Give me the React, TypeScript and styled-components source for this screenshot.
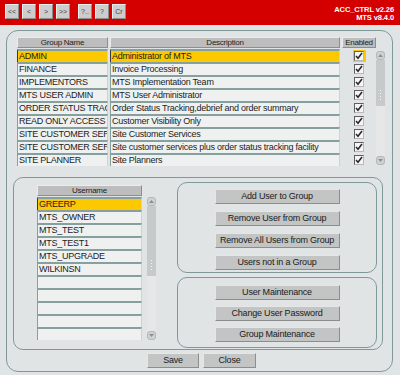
import React from "react";
import styled, { createGlobalStyle } from "styled-components";

const GlobalStyle = createGlobalStyle`
  html, body { margin: 0; padding: 0; background: #e1e4e4; }
  body { font-family: "Liberation Sans", Arial, sans-serif; color: #1c1c1c; }
  * { box-sizing: border-box; }
`;

const Screen = styled.div`
  width: 400px;
  height: 375px;
  overflow: hidden;
  background: #e1e4e4;
  display: flex;
  flex-direction: column;
`;

const TopBar = styled.header`
  height: 25px;
  flex: none;
  background: #d40000;
  display: flex;
  align-items: flex-start;
  justify-content: space-between;
  padding: 4px 6px 0 5px;
`;

const Tools = styled.div`
  display: flex;
  gap: 8px;
`;

const ToolGroup = styled.div`
  display: flex;
  gap: 3px;
`;

const ToolButton = styled.button`
  width: 14px;
  height: 15px;
  padding: 0;
  margin: 0;
  background: #cdcdcd;
  border: 1px solid;
  border-color: #efefef #8c8c8c #8c8c8c #efefef;
  font-family: "Liberation Sans", Arial, sans-serif;
  font-size: 7px;
  color: #444;
  display: flex;
  align-items: center;
  justify-content: center;
`;

const Version = styled.div`
  color: #fff;
  font-weight: bold;
  font-size: 7.5px;
  line-height: 7.5px;
  text-align: right;
  padding-top: 2px;
  letter-spacing: -0.1px;
`;

const OuterPanel = styled.section`
  margin: 5px 0 0 6px;
  width: 387px;
  height: 342px;
  border: 1px solid #7f9999;
  border-radius: 12px;
  padding: 6px 0 0 6px;
  display: flex;
  flex-direction: column;
`;

const TableArea = styled.div`
  display: flex;
  margin-left: 4px;
`;

const GroupGrid = styled.div`
  display: grid;
  grid-template-columns: 91px 230px 34px;
  grid-template-rows: 12px repeat(9, 13px);
  column-gap: 2px;
`;

const HeadCell = styled.div`
  height: 11px;
  background: #bdbdbd;
  border: 1px solid;
  border-color: #ececec #8e8e8e #8e8e8e #ececec;
  font-size: 8px;
  line-height: 9px;
  letter-spacing: -0.25px;
  text-align: center;
  color: #222;
  white-space: nowrap;
  overflow: hidden;
`;

const Cell = styled.div<{ $selected?: boolean }>`
  height: 13px;
  background: ${(p) => (p.$selected ? "#fcc800" : "#eff1f1")};
  border-top: 2px solid #86a0a0;
  border-left: 1px solid ${(p) => (p.$selected ? "#3a3a3a" : "#86a0a0")};
  border-right: 1px solid #c9d4d4;
  padding-left: 1px;
  font-size: 9px;
  line-height: 11px;
  letter-spacing: -0.25px;
  white-space: nowrap;
  overflow: hidden;
  color: #1c1c1c;
`;

const CheckCell = styled.div`
  height: 13px;
  display: flex;
  align-items: center;
  justify-content: center;
`;

const CheckHolder = styled.div<{ $selected?: boolean }>`
  width: 13px;
  height: 12px;
  margin-top: 1px;
  display: flex;
  align-items: center;
  justify-content: center;
  background: ${(p) => (p.$selected ? "#fcc800" : "transparent")};
`;

const CheckBox = styled.div`
  width: 10px;
  height: 10px;
  background: #f5f5f5;
  border: 1px solid;
  border-color: #5e5e5e #b8b8b8 #b8b8b8 #5e5e5e;
  display: flex;
  align-items: center;
  justify-content: center;
`;

const ScrollBar = styled.div<{ $top: number; $height: number }>`
  width: 9px;
  height: ${(p) => p.$height}px;
  margin-top: ${(p) => p.$top}px;
  display: flex;
  flex-direction: column;
`;

const ScrollArrow = styled.div`
  width: 9px;
  height: 9px;
  flex: none;
  border-radius: 3px;
  background: #cfd2d2;
  border: 1px solid #b3b8b8;
  display: flex;
  align-items: center;
  justify-content: center;
`;

const ScrollThumb = styled.div<{ $height: number }>`
  height: ${(p) => p.$height}px;
  flex: none;
  background: #c7caca;
  display: flex;
  flex-direction: column;
  align-items: center;
  justify-content: flex-end;
  padding-bottom: 6px;
  gap: 2px;
`;

const GripDot = styled.span`
  width: 1px;
  height: 1px;
  background: #f4f4f4;
`;

const ScrollTrack = styled.div`
  flex: 1;
  background: #e6e8e8;
`;

const LowerPanel = styled.section`
  margin-top: 11px;
  width: 370px;
  height: 173px;
  border: 1px solid #7f9999;
  border-radius: 10px;
  padding: 4px 0 0 23px;
  display: flex;
  align-items: flex-start;
`;

const UserArea = styled.div`
  display: flex;
  gap: 5px;
  margin-top: 3px;
`;

const UserList = styled.div`
  width: 105px;
  display: flex;
  flex-direction: column;
`;

const UserHead = styled(HeadCell)`
  margin-bottom: 1px;
`;

const ButtonColumn = styled.div`
  margin-left: 21px;
  display: flex;
  flex-direction: column;
  gap: 4px;
`;

const ButtonBox = styled.div<{ $height: number; $pad: number; $gap: number }>`
  width: 200px;
  height: ${(p) => p.$height}px;
  border: 1px solid #7f9999;
  border-radius: 10px;
  padding-top: ${(p) => p.$pad}px;
  display: flex;
  flex-direction: column;
  align-items: center;
  gap: ${(p) => p.$gap}px;
`;

const FormButton = styled.button<{ $width?: number }>`
  width: ${(p) => p.$width ?? 125}px;
  height: 15px;
  margin: 0;
  padding: 0;
  background: #c3c4c4;
  border: 1px solid;
  border-color: #e6e6e6 #8d8d8d #8d8d8d #e6e6e6;
  font-family: "Liberation Sans", Arial, sans-serif;
  font-size: 9px;
  letter-spacing: -0.2px;
  color: #202020;
  line-height: 13px;
  white-space: nowrap;
`;

const Footer = styled.div`
  margin-top: 3px;
  display: flex;
  justify-content: center;
  gap: 4px;
  padding-right: 2px;
`;

const groups = [
  ["ADMIN", "Administrator of MTS"],
  ["FINANCE", "Invoice Processing"],
  ["IMPLEMENTORS", "MTS Implementation Team"],
  ["MTS USER ADMIN", "MTS User Administrator"],
  ["ORDER STATUS TRAC", "Order Status Tracking,debrief and order summary"],
  ["READ ONLY ACCESS", "Customer Visibility Only"],
  ["SITE CUSTOMER SERV", "Site Customer Services"],
  ["SITE CUSTOMER SERV", "Site customer services plus order status tracking facility"],
  ["SITE PLANNER", "Site Planners"],
];

const users = ["GREERP", "MTS_OWNER", "MTS_TEST", "MTS_TEST1", "MTS_UPGRADE", "WILKINSN", "", "", "", "", ""];

const Check = () => (
  <svg width="8" height="8" viewBox="0 0 8 8">
    <path d="M1 4 L3 6.2 L7 1" fill="none" stroke="#2a2a2a" strokeWidth="1.6" />
  </svg>
);

const Arrow = ({ up }: { up?: boolean }) => (
  <svg width="5" height="3" viewBox="0 0 5 3">
    <path d={up ? "M0 3 L2.5 0 L5 3 Z" : "M0 0 L2.5 3 L5 0 Z"} fill="#8a8f8f" />
  </svg>
);

const Scroll = ({ top, height, thumb }: { top: number; height: number; thumb: number }) => (
  <ScrollBar $top={top} $height={height}>
    <ScrollArrow>
      <Arrow up />
    </ScrollArrow>
    <ScrollThumb $height={thumb}>
      <GripDot />
      <GripDot />
      <GripDot />
      <GripDot />
    </ScrollThumb>
    <ScrollTrack />
    <ScrollArrow>
      <Arrow />
    </ScrollArrow>
  </ScrollBar>
);

export default function App() {
  return (
    <Screen>
      <GlobalStyle />
      <TopBar>
        <Tools>
          <ToolGroup>
            <ToolButton>&lt;&lt;</ToolButton>
            <ToolButton>&lt;</ToolButton>
            <ToolButton>&gt;</ToolButton>
            <ToolButton>&gt;&gt;</ToolButton>
          </ToolGroup>
          <ToolGroup>
            <ToolButton>?..</ToolButton>
            <ToolButton>?</ToolButton>
            <ToolButton>Cr</ToolButton>
          </ToolGroup>
        </Tools>
        <Version>
          ACC_CTRL v2.26
          <br />
          MTS v8.4.0
        </Version>
      </TopBar>
      <OuterPanel>
        <TableArea>
          <GroupGrid>
            <HeadCell>Group Name</HeadCell>
            <HeadCell>Description</HeadCell>
            <HeadCell>Enabled</HeadCell>
            {groups.map(([name, desc], i) => (
              <React.Fragment key={name + i}>
                <Cell $selected={i === 0}>{name}</Cell>
                <Cell $selected={i === 0}>{desc}</Cell>
                <CheckCell>
                  <CheckHolder $selected={i === 0}>
                    <CheckBox>
                      <Check />
                    </CheckBox>
                  </CheckHolder>
                </CheckCell>
              </React.Fragment>
            ))}
          </GroupGrid>
          <Scroll top={14} height={114} thumb={46} />
        </TableArea>
        <LowerPanel>
          <UserArea>
            <UserList>
              <UserHead>Username</UserHead>
              {users.map((u, i) => (
                <Cell key={i} $selected={i === 0}>
                  {u}
                </Cell>
              ))}
            </UserList>
            <Scroll top={12} height={143} thumb={70} />
          </UserArea>
          <ButtonColumn>
            <ButtonBox $height={91} $pad={6} $gap={7}>
              <FormButton>Add User to Group</FormButton>
              <FormButton>Remove User from Group</FormButton>
              <FormButton>Remove All Users from Group</FormButton>
              <FormButton>Users not in a Group</FormButton>
            </ButtonBox>
            <ButtonBox $height={71} $pad={7} $gap={6}>
              <FormButton>User Maintenance</FormButton>
              <FormButton>Change User Password</FormButton>
              <FormButton>Group Maintenance</FormButton>
            </ButtonBox>
          </ButtonColumn>
        </LowerPanel>
        <Footer>
          <FormButton $width={52}>Save</FormButton>
          <FormButton $width={53}>Close</FormButton>
        </Footer>
      </OuterPanel>
    </Screen>
  );
}
